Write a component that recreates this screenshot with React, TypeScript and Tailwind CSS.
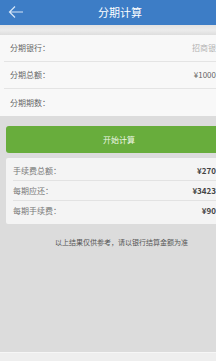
import React from 'react';

const font = { fontFamily: '"Noto Sans CJK SC", "Liberation Sans", sans-serif' };

// the screen is cut at the right edge, so only the visible part of each value is shown
const inputRows = [
  { label: '分期银行：', value: '招商银', muted: true },
  { label: '分期总额：', value: '¥1000', muted: false },
  { label: '分期期数：', value: '', muted: false },
];

const resultRows = [
  { label: '手续费总额：', value: '¥270' },
  { label: '每期应还：', value: '¥3423' },
  { label: '每期手续费：', value: '¥90' },
];

const App: React.FC = () => {
  return (
    <div className="w-[216px] h-[361px] overflow-hidden bg-[#dcdcdc] flex flex-col" style={font}>
      {/* header */}
      <div className="h-[25px] bg-[#3d7dc6] flex items-center relative">
        <svg className="absolute left-[8px] top-[5px]" width="16" height="14" viewBox="0 0 16 14" fill="none">
          <path d="M15 7H1.5M7 1.5L1.5 7L7 12.5" stroke="#d6e6f7" strokeWidth="1.2" />
        </svg>
        <div className="flex-1 pl-[24px] text-center text-white text-[11px] leading-none">分期计算</div>
      </div>
      <div className="h-[10px] bg-gradient-to-b from-[#e2e2e2] via-[#ececec] to-[#dedede]" />

      {/* input card */}
      <div className="bg-[#f8f8f8] flex flex-col">
        {inputRows.map((r, i) => (
          <div
            key={r.label}
            className={`h-[27px] ml-[4px] flex items-center justify-between pl-[6px] ${i < inputRows.length - 1 ? 'border-b border-[#e4e4e4]' : ''}`}
          >
            <span className="text-[8px] text-[#666]">{r.label}</span>
            <span className={`text-[8px] ${r.muted ? 'text-[#b4b4b4]' : 'text-[#666]'}`}>{r.value}</span>
          </div>
        ))}
      </div>

      {/* button */}
      <div className="pl-[6px] pt-[10px]">
        <div className="h-[27px] rounded-l-[3px] bg-[#68ad3c] flex items-center justify-center pl-[16px] text-[8px] text-[#eef6e6]">
          开始计算
        </div>
      </div>

      {/* results */}
      <div className="pl-[6px] pt-[5px]">
        <div className="bg-[#f4f4f4] rounded-l-[2px] pl-[7px] py-[3px] flex flex-col">
          {resultRows.map((r, i) => (
            <div
              key={r.label}
              className={`h-[20px] flex items-center justify-between ${i < resultRows.length - 1 ? 'border-b border-[#e2e2e2]' : ''}`}
            >
              <span className="text-[8px] text-[#777]">{r.label}</span>
              <span className="text-[8px] font-bold text-[#444]">{r.value}</span>
            </div>
          ))}
        </div>
      </div>

      <div className="pt-[13px] pl-[55px] text-[7px] text-[#555] whitespace-nowrap">以上结果仅供参考，请以银行结算金额为准</div>

      <div className="flex-1" />
      <div className="h-[9px] bg-[#eeeeee] border-t border-[#f6f6f6]" />
    </div>
  );
};

export default App;
